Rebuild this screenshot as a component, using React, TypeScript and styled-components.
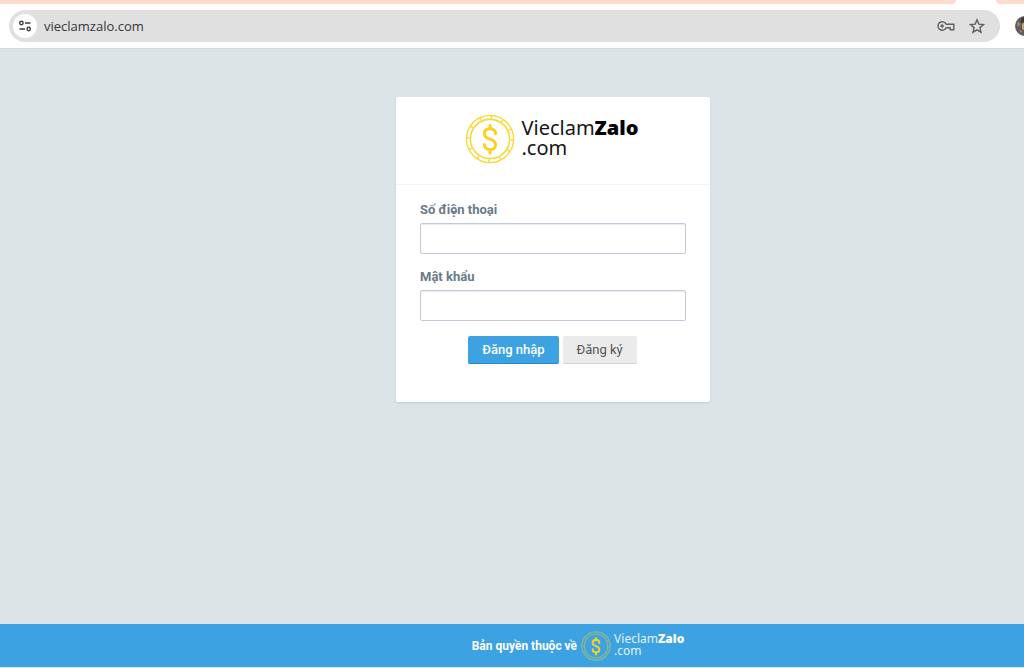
import React from "react";
import styled, { createGlobalStyle } from "styled-components";

const GlobalStyle = createGlobalStyle`
  *, *::before, *::after { box-sizing: border-box; }
  html, body, #root { height: 100%; }
  body {
    margin: 0;
    overflow: hidden;
    background: #dce4e7;
    font-family: Roboto, "Liberation Sans", sans-serif;
    font-size: 13px;
  }
`;

const Page = styled.div`
  display: flex;
  flex-direction: column;
  min-height: 100vh;
`;

const TabStrip = styled.div`
  display: flex;
  gap: 40px;
  height: 4px;
  background: #fff;
`;

const TabEdge = styled.div<{ $grow?: boolean }>`
  flex: ${(p) => (p.$grow ? "1" : "0 0 28px")};
  background: #fddccd;
  border-radius: ${(p) => (p.$grow ? "0 0 8px 0" : "0 0 0 8px")};
`;

const Toolbar = styled.header`
  display: flex;
  align-items: center;
  gap: 15px;
  height: 45px;
  padding: 0 0 0 9px;
  background: #fff;
  border-bottom: 1px solid #d5dadb;
  overflow: hidden;
`;

const AddressBar = styled.div`
  display: flex;
  flex: 1;
  align-items: center;
  height: 32px;
  padding: 0 13px 0 4px;
  border-radius: 16px;
  background: #e0e0e0;
`;

const IconButton = styled.button<{ $filled?: boolean }>`
  display: flex;
  align-items: center;
  justify-content: center;
  width: ${(p) => (p.$filled ? "24px" : "20px")};
  height: 24px;
  margin: 0 0 0 ${(p) => (p.$filled ? "0" : "11px")};
  padding: 0;
  border: 0;
  border-radius: 50%;
  background: ${(p) => (p.$filled ? "#fff" : "transparent")};
  color: #5f5f64;
`;

const AddressInput = styled.input`
  flex: 1;
  min-width: 0;
  padding: 0 0 0 7px;
  border: 0;
  background: transparent;
  color: #35363a;
  font: 13px "Open Sans", sans-serif;
  outline: none;
`;

const AvatarClip = styled.div`
  flex: 0 0 9px;
  height: 20px;
  overflow: hidden;
`;

const Main = styled.main`
  display: flex;
  flex: 1;
  justify-content: center;
  align-items: flex-start;
  padding: 48px 0 48px 82px;
`;

const Card = styled.section`
  width: 100%;
  max-width: 314px;
  border-radius: 2px;
  background: #fff;
  box-shadow: 0 1px 2px rgba(80, 100, 115, 0.2);
`;

const CardHeader = styled.div`
  display: flex;
  justify-content: center;
  align-items: flex-start;
  height: 88px;
  padding: 17px 2px 0 0;
  border-bottom: 1px solid #f3f4f5;
`;

const Form = styled.form`
  padding: 16px 24px 38px;
`;

const Field = styled.div`
  display: flex;
  flex-direction: column;
  gap: 4px;
  margin-bottom: 14px;
`;

const Label = styled.label`
  color: #6a7a88;
  font: bold 13px/18px Roboto, sans-serif;
`;

const TextInput = styled.input`
  width: 100%;
  height: 31px;
  padding: 4px 8px;
  border: 1px solid #c0cad8;
  border-radius: 2px;
  background: #fff;
  box-shadow: inset 0 1px 1px rgba(0, 0, 0, 0.08);
  font: 13px Roboto, sans-serif;
`;

const Actions = styled.div`
  display: flex;
  justify-content: center;
  gap: 4px;
  padding: 1px 1px 0 0;
`;

const Button = styled.button<{ $primary?: boolean }>`
  height: 28px;
  padding: 0 14px 1px;
  border: 0;
  border-bottom: 1px solid ${(p) => (p.$primary ? "#2489cc" : "#d2d2d2")};
  border-radius: 2px;
  background: ${(p) => (p.$primary ? "#3ca2e2" : "#ebebeb")};
  color: ${(p) => (p.$primary ? "#fff" : "#555")};
  font: ${(p) => (p.$primary ? 500 : 400)} 13px Roboto, sans-serif;
  white-space: nowrap;
`;

const Footer = styled.footer`
  display: flex;
  align-items: center;
  justify-content: center;
  gap: 4px;
  height: 44px;
  padding-left: 132px;
  border-bottom: 1px solid #dce8f0;
  background: #3ca2e2;
  color: #fff;
  font: bold 12px/18px Roboto, sans-serif;
`;

const Brand = styled.a<{ $small?: boolean }>`
  display: flex;
  align-items: center;
  gap: ${(p) => (p.$small ? "3px" : "6px")};
  height: ${(p) => (p.$small ? "30px" : "50px")};
  color: ${(p) => (p.$small ? "#e3f2fc" : "#161616")};
  font: ${(p) => (p.$small ? "12px/12px" : "20px/20px")} "Noto Sans", "Open Sans", sans-serif;
  text-decoration: none;
  svg { flex: none; }
  strong { font-family: "Open Sans", sans-serif; font-weight: 800; color: ${(p) => (p.$small ? "#fff" : "#000")}; }
`;

const BrandText = styled.span`
  display: block;
  padding-bottom: 2px;
`;

const BrandLine = styled.span`
  display: block;
`;

function Coin({ size, muted }: { size: number; muted?: boolean }) {
  const ring = muted ? "#8db98a" : "#fbd837";
  return (
    <svg width={size} height={size} viewBox="0 0 50 50" fill="none" aria-hidden="true">
      <circle cx="25" cy="25" r="23.6" stroke={ring} strokeWidth={muted ? 2 : 1.4} />
      <circle cx="25" cy="25" r="19.6" stroke={ring} strokeWidth={muted ? 2 : 1.6} />
      <circle cx="25" cy="25" r="21.8" stroke={ring} strokeWidth="2.4" strokeDasharray="1.6 9.815" />
      <path
        d="M30.6 19.8c0-3.5-2.4-5-5.6-5s-5.6 1.7-5.6 4.9c0 7.2 11.2 3.8 11.2 11 0 3.1-2.4 4.9-5.6 4.9s-5.6-1.7-5.6-5M25 11.5v3.3M25 35.6v3.4"
        stroke={muted ? "#f3d02d" : "#f9d125"}
        strokeWidth={muted ? 3.4 : 3}
        strokeLinecap="round"
      />
    </svg>
  );
}

function Logo({ small }: { small?: boolean }) {
  return (
    <Brand href="/" $small={small}>
      <Coin size={small ? 30 : 50} muted={small} />
      <BrandText>
        <BrandLine>Vieclam<strong>Zalo</strong></BrandLine>
        <BrandLine>.com</BrandLine>
      </BrandText>
    </Brand>
  );
}

function SiteInfoIcon() {
  return (
    <svg width="14" height="12" viewBox="0 0 14 12" fill="none" stroke="#3c3c40" strokeWidth="1.4">
      <circle cx="3.4" cy="3" r="1.7" />
      <path d="M7 3h5.5M1.5 9h5.5" />
      <circle cx="10.7" cy="9" r="1.7" />
    </svg>
  );
}

function KeyIcon() {
  return (
    <svg width="18" height="12" viewBox="0 0 18 12" fill="none" stroke="currentColor" strokeWidth="1.4">
      <path d="M9.2 4.3h7.6v5.4h-3.6v-2H9.2a4.3 4.3 0 1 1 0-3.4Z" strokeLinejoin="round" />
      <circle cx="5.1" cy="6" r="1.7" fill="currentColor" stroke="none" />
    </svg>
  );
}

function StarIcon() {
  return (
    <svg width="16" height="16" viewBox="0 0 16 16" fill="none" stroke="currentColor" strokeWidth="1.4">
      <path d="m8 1.8 1.8 4.3 4.7.4-3.6 3.1 1.1 4.6L8 11.8l-4 2.4 1.1-4.6-3.6-3.1 4.7-.4Z" />
    </svg>
  );
}

function Avatar() {
  return (
    <svg width="20" height="20" viewBox="0 0 20 20" aria-hidden="true">
      <circle cx="10" cy="10" r="10" fill="#625d5d" />
      <path d="M6 2.5 9 1v5L6 7Z" fill="#3d3938" />
      <path d="M7 8l3-2v9l-3-2Z" fill="#c6a56b" />
      <path d="M2 7l2-1 1 3-2 2ZM4 14l3 1-1 2Z" fill="#96908c" />
    </svg>
  );
}

export default function App() {
  return (
    <Page>
      <GlobalStyle />
      <TabStrip>
        <TabEdge $grow />
        <TabEdge />
      </TabStrip>
      <Toolbar>
        <AddressBar>
          <IconButton type="button" $filled aria-label="Site information"><SiteInfoIcon /></IconButton>
          <AddressInput aria-label="Address" defaultValue="vieclamzalo.com" />
          <IconButton type="button" aria-label="Passwords"><KeyIcon /></IconButton>
          <IconButton type="button" aria-label="Bookmark"><StarIcon /></IconButton>
        </AddressBar>
        <AvatarClip><Avatar /></AvatarClip>
      </Toolbar>
      <Main>
        <Card>
          <CardHeader><Logo /></CardHeader>
          <Form onSubmit={(e) => e.preventDefault()}>
            <Field>
              <Label htmlFor="phone">Số điện thoại</Label>
              <TextInput id="phone" type="tel" />
            </Field>
            <Field>
              <Label htmlFor="password">Mật khẩu</Label>
              <TextInput id="password" type="password" />
            </Field>
            <Actions>
              <Button type="submit" $primary>Đăng nhập</Button>
              <Button type="button">Đăng ký</Button>
            </Actions>
          </Form>
        </Card>
      </Main>
      <Footer>
        <span>Bản quyền thuộc về</span>
        <Logo small />
      </Footer>
    </Page>
  );
}
